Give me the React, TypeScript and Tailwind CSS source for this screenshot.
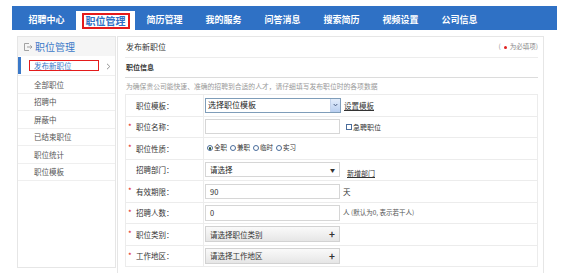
import React from "react";

const navItems = ["招聘中心", "职位管理", "简历管理", "我的服务", "问答消息", "搜索简历", "视频设置", "公司信息"];
const sideItems = ["全部职位", "招聘中", "屏蔽中", "已结束职位", "职位统计", "职位模板"];

function Label({ text, star }: { text: string; star?: boolean }) {
  return (
    <div className="w-[78px] shrink-0 h-full border-r border-[#ececec] flex items-center relative">
      {star && <span className="absolute left-[2px] top-1/2 -translate-y-1/2 text-[#e02020] text-[8px] leading-none">*</span>}
      <span className="pl-[10px] text-[7.5px] text-[#333]">{text}</span>
    </div>
  );
}

function Row({ children, label, star }: { children?: React.ReactNode; label: string; star?: boolean }) {
  return (
    <div className="h-[21.5px] flex border-b border-[#ececec]">
      <Label text={label} star={star} />
      <div className="flex-1 flex items-center pl-[1px]">{children}</div>
    </div>
  );
}

function Radio({ checked, label }: { checked?: boolean; label: string }) {
  return (
    <div className="flex items-center mr-[3px]">
      <span className="w-[6px] h-[6px] rounded-full border border-[#4a6d9c] bg-white flex items-center justify-center mr-[1px]">
        {checked && <span className="w-[2.5px] h-[2.5px] rounded-full bg-[#2b4f2b]" />}
      </span>
      <span className="text-[6.5px] text-[#333]">{label}</span>
    </div>
  );
}

function PlusBox({ text }: { text: string }) {
  return (
    <div className="w-[135px] h-[16px] border border-[#d2d2d2] bg-gradient-to-b from-[#fafafa] to-[#e6e6e6] flex items-center justify-between px-[4px]">
      <span className="text-[7.5px] text-[#333]">{text}</span>
      <span className="text-[10px] leading-none font-bold text-[#333]">+</span>
    </div>
  );
}

export default function App() {
  return (
    <div className="w-[561px] h-[273px] bg-white overflow-hidden font-['Noto_Sans_CJK_SC',sans-serif]">
      <div className="pt-[6px] pl-[12px] pr-[4px]">
        <div className="h-[24px] bg-[#2f71c5] flex pl-[5px]">
          {navItems.map((n, i) =>
            i === 1 ? (
              <div key={n} className="w-[59px] mt-[5px] h-[19px] bg-white flex items-center justify-center">
                <span className="border-2 border-[#e41b1b] px-[2px] h-[16px] flex items-center text-[10px] font-bold text-[#2f71c5] leading-none">
                  {n}
                </span>
              </div>
            ) : (
              <div key={n} className="w-[59px] h-full flex items-center justify-center pt-[3px] text-[9px] font-semibold text-white leading-none">
                {n}
              </div>
            )
          )}
        </div>
      </div>
      <div className="flex pt-[6px] pl-[17px] gap-[1px]">
        {/* sidebar */}
        <div className="w-[99px] h-[232px] border border-[#e6e6e6] bg-white shrink-0">
          <div className="h-[19px] bg-[#f5f5f5] flex items-center pl-[5px]">
            <svg width="10" height="10" viewBox="0 0 10 10" className="mr-[2px]">
              <path d="M6 1.5H1.5v7H6" fill="none" stroke="#999" strokeWidth="0.9" />
              <path d="M4 5h5M7.3 3.3L9 5 7.3 6.7" fill="none" stroke="#999" strokeWidth="0.9" />
            </svg>
            <span className="text-[10px] text-[#3a78c8] leading-none">职位管理</span>
          </div>
          <div className="h-[20px] relative flex items-center border-b border-[#efefef]">
            <span className="absolute left-0 top-[1px] bottom-[1px] w-[2.5px] bg-[#3a78c8]" />
            <span className="ml-[11px] w-[70px] h-[11px] border border-[#e41b1b] flex items-center pl-[4px] text-[7.5px] text-[#3a78c8] leading-none">
              发布新职位
            </span>
            <svg width="5" height="7" viewBox="0 0 5 7" className="absolute left-[88px] top-[7px]">
              <path d="M1 0.8L3.8 3.5 1 6.2" fill="none" stroke="#888" strokeWidth="0.9" />
            </svg>
          </div>
          {sideItems.map((s) => (
            <div key={s} className="h-[17.5px] flex items-center border-b border-[#efefef] pl-[16px] text-[7.5px] text-[#555] leading-none">
              {s}
            </div>
          ))}
        </div>
        {/* main */}
        <div className="w-[427px] h-[240px] border border-[#e6e6e6] bg-white pl-[7px] pr-[5px] shrink-0">
          <div className="h-[21px] flex items-center justify-between border-b border-[#ededed]">
            <span className="text-[8px] text-[#333] pl-[1px]">发布新职位</span>
            <span className="text-[6.5px] text-[#888] flex items-center">
              (<span className="w-[3px] h-[3px] rounded-full bg-[#e02020] mx-[3px]" /> 为必填项)
            </span>
          </div>
          <div className="h-[20px] flex items-center border-b border-[#dcdcdc]">
            <span className="text-[7px] font-bold text-[#333] pl-[1px]">职位信息</span>
          </div>
          <div className="h-[16px] flex items-center">
            <span className="text-[6.8px] text-[#999] pl-[1px] whitespace-nowrap">为确保贵公司能快速、准确的招聘到合适的人才，请仔细填写发布职位时的各项数据</span>
          </div>
          <div className="border border-b-0 border-[#ececec]">
            <Row label="职位模板：">
              <div className="w-[136px] h-[15px] border border-[#7f9db9] bg-white flex items-center justify-between">
                <span className="pl-[2px] text-[8px] text-[#222] leading-none">选择职位模板</span>
                <span className="w-[10px] h-[13px] bg-gradient-to-b from-[#e3edfb] to-[#b9cff0] border-l border-[#c3d3ec] flex items-center justify-center">
                  <svg width="5" height="4" viewBox="0 0 5 4">
                    <path d="M0.7 1L2.5 2.9 4.3 1" fill="none" stroke="#4d6185" strokeWidth="1" />
                  </svg>
                </span>
              </div>
              <span className="ml-[3px] text-[7.5px] text-[#333] underline">设置模板</span>
            </Row>
            <Row label="职位名称：" star>
              <div className="w-[135px] h-[15px] border border-[#d6d6d6] bg-white" />
              <span className="ml-[6px] w-[6px] h-[6px] border border-[#4a6d9c] bg-white" />
              <span className="ml-[1px] text-[7px] text-[#333]">急聘职位</span>
            </Row>
            <Row label="职位性质：" star>
              <div className="flex items-center pl-[2px]">
                <Radio checked label="全职" />
                <Radio label="兼职" />
                <Radio label="临时" />
                <Radio label="实习" />
              </div>
            </Row>
            <Row label="招聘部门：">
              <div className="w-[135px] h-[15px] border border-[#d6d6d6] bg-white flex items-center justify-between px-[4px]">
                <span className="text-[7.5px] text-[#222]">请选择</span>
                <span className="text-[5px] text-[#333]">▼</span>
              </div>
              <span className="ml-[7px] mt-[6px] text-[7px] text-[#333] underline">新增部门</span>
            </Row>
            <Row label="有效期限：" star>
              <div className="w-[135px] h-[15px] border border-[#d6d6d6] bg-white flex items-center pl-[4px] text-[7.5px] text-[#333]">90</div>
              <span className="ml-[3px] text-[7.5px] text-[#333]">天</span>
            </Row>
            <Row label="招聘人数：" star>
              <div className="w-[135px] h-[16px] border border-[#d6d6d6] bg-white flex items-center pl-[4px] text-[7.5px] text-[#333]">0</div>
              <span className="ml-[3px] text-[6.5px] text-[#555]">人 (默认为0, 表示若干人)</span>
            </Row>
            <Row label="职位类别：" star>
              <PlusBox text="请选择职位类别" />
            </Row>
            <Row label="工作地区：" star>
              <PlusBox text="请选择工作地区" />
            </Row>
          </div>
        </div>
      </div>
    </div>
  );
}
